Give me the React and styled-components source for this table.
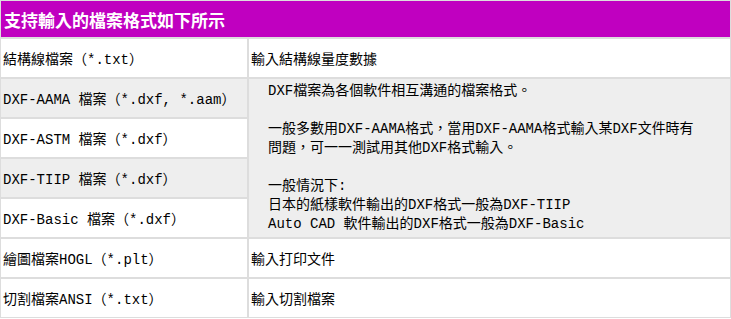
import React from 'react';
import styled, { createGlobalStyle } from 'styled-components';

const GlobalStyle = createGlobalStyle`
  html, body {
    margin: 0;
    padding: 0;
    background: #fff;
  }
`;

const Table = styled.table`
  width: 731px;
  border-collapse: separate;
  border-spacing: 0;
  font-family: "Liberation Mono", "Noto Sans CJK TC", monospace;
  font-size: 14px;
  color: #000;
  table-layout: fixed;
`;

const HeadCell = styled.th`
  height: 36px;
  padding: 0 3px;
  background: #c000c0;
  color: #fff;
  font-family: "Noto Sans CJK TC", sans-serif;
  font-size: 17px;
  font-weight: 700;
  text-align: left;
  border: 1px solid #ddd;
`;

const Cell = styled.td`
  height: 38px;
  padding: 0 2px;
  border: 1px solid #ddd;
  background: ${(p) => (p.$shade ? '#eee' : '#fff')};
  vertical-align: middle;
  white-space: nowrap;
`;

const NoteCell = styled(Cell)`
  padding: 0 34px 0 19px;
  background: #eee;
  line-height: 19px;
  white-space: normal;
`;

const rows = [
  { name: '結構線檔案（*.txt）', desc: '輸入結構線量度數據' },
  { name: 'DXF-AAMA 檔案（*.dxf, *.aam）', shade: true, note: true },
  { name: 'DXF-ASTM 檔案（*.dxf）' },
  { name: 'DXF-TIIP 檔案（*.dxf）', shade: true },
  { name: 'DXF-Basic 檔案（*.dxf）' },
  { name: '繪圖檔案HOGL（*.plt）', desc: '輸入打印文件' },
  { name: '切割檔案ANSI（*.txt）', desc: '輸入切割檔案' },
];

const Note = () => (
  <NoteCell rowSpan={4}>
    DXF檔案為各個軟件相互溝通的檔案格式。
    <br />
    <br />
    一般多數用DXF-AAMA格式，當用DXF-AAMA格式輸入某DXF文件時有問題，可一一測試用其他DXF格式輸入。
    <br />
    <br />
    一般情況下:
    <br />
    日本的紙樣軟件輸出的DXF格式一般為DXF-TIIP
    <br />
    Auto CAD 軟件輸出的DXF格式一般為DXF-Basic
  </NoteCell>
);

const App = () => (
  <>
    <GlobalStyle />
    <Table>
      <colgroup>
        <col style={{ width: 248 }} />
        <col />
      </colgroup>
      <thead>
        <tr>
          <HeadCell colSpan={2}>支持輸入的檔案格式如下所示</HeadCell>
        </tr>
      </thead>
      <tbody>
        {rows.map((r) => (
          <tr key={r.name}>
            <Cell $shade={r.shade}>{r.name}</Cell>
            {r.note && <Note />}
            {r.desc && <Cell>{r.desc}</Cell>}
          </tr>
        ))}
      </tbody>
    </Table>
  </>
);

export default App;
